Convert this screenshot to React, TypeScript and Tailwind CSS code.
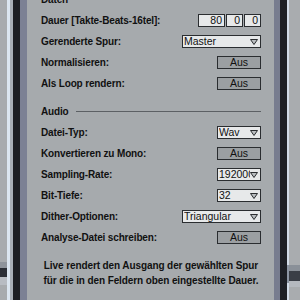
import React from "react";

const font = { fontFamily: '"Liberation Sans", Arial, sans-serif' };

function Arrow() {
  return (
    <svg width="8" height="6" viewBox="0 0 8 6" className="shrink-0">
      <polygon points="0.5,0.5 7.5,0.5 4,5.5" fill="#b9bdc0" stroke="#2a2d30" strokeWidth="1" />
    </svg>
  );
}

function Select({ value, wide }: { value: string; wide?: boolean }) {
  return (
    <div
      className={
        (wide ? "w-[79px]" : "w-[44px]") +
        " h-[13px] flex items-center bg-[#e7e9ea] border border-[#2a2d30] pl-[1px] pr-[2px] overflow-hidden"
      }
    >
      <span className="flex-1 overflow-hidden whitespace-nowrap text-[10.5px] leading-none text-[#111]">{value}</span>
      <Arrow />
    </div>
  );
}

function Toggle({ label }: { label: string }) {
  return (
    <div className="w-[44px] h-[13px] flex items-center justify-center bg-[#9b9fa2] border border-[#2a2d30] text-[10.5px] leading-none text-[#111]">
      {label}
    </div>
  );
}

function NumBox({ value, w }: { value: string; w: string }) {
  return (
    <div className={w + " h-[13px] flex items-center justify-end bg-[#e7e9ea] border border-[#2a2d30] pr-[2px] text-[10.5px] leading-none text-[#111]"}>
      {value}
    </div>
  );
}

function Row({ label, children }: { label: string; children: React.ReactNode }) {
  return (
    <div className="h-[21px] flex items-center justify-between">
      <span className="text-[10px] font-bold tracking-[-0.15px] text-[#111]">{label}</span>
      {children}
    </div>
  );
}

function Header({ label, className }: { label: string; className?: string }) {
  return (
    <div className={"h-[21px] flex items-center " + (className ?? "")}>
      <span className="text-[10px] font-bold tracking-[-0.15px] text-[#111]">{label}</span>
      <div className="flex-1 ml-[7px] h-px bg-[#5c6064]" />
    </div>
  );
}

export default function App() {
  return (
    <div className="w-[300px] h-[300px] flex overflow-hidden bg-[#a6aaad]" style={font}>
      {/* left frame */}
      <div className="w-[7px] flex flex-col bg-[#a8abae]">
        <div className="h-[262px]" />
        <div className="h-[6px] bg-[#8f949b]" />
        <div className="h-[9px] bg-[#2b2e35]" />
        <div className="h-[8px] bg-[#b8bcc2]" />
      </div>
      <div className="w-[3px] bg-[#dce6f0]" />
      <div className="w-[3px] bg-[#a9b0b9]" />
      <div className="w-[7px] bg-[#1d1f25]" />
      <div className="w-[7px] bg-[#7c8194]" />

      {/* panel */}
      <div className="flex-1 flex flex-col pl-[14px] pr-[13px]">
        <Header label="Daten" className="-mt-[11px]" />
        <Row label="Dauer [Takte-Beats-16tel]:">
          <div className="flex gap-[1px]">
            <NumBox value="80" w="w-[27px]" />
            <NumBox value="0" w="w-[17px]" />
            <NumBox value="0" w="w-[17px]" />
          </div>
        </Row>
        <Row label="Gerenderte Spur:">
          <Select value="Master" wide />
        </Row>
        <Row label="Normalisieren:">
          <Toggle label="Aus" />
        </Row>
        <Row label="Als Loop rendern:">
          <Toggle label="Aus" />
        </Row>

        <Header label="Audio" className="mt-[7px]" />
        <Row label="Datei-Typ:">
          <Select value="Wav" />
        </Row>
        <Row label="Konvertieren zu Mono:">
          <Toggle label="Aus" />
        </Row>
        <Row label="Sampling-Rate:">
          <Select value="192000" />
        </Row>
        <Row label="Bit-Tiefe:">
          <Select value="32" />
        </Row>
        <Row label="Dither-Optionen:">
          <Select value="Triangular" wide />
        </Row>
        <Row label="Analyse-Datei schreiben:">
          <Toggle label="Aus" />
        </Row>

        <p className="mt-[10px] text-center text-[10px] font-bold leading-[15px] tracking-[-0.1px] text-[#111]">
          Live rendert den Ausgang der gewählten Spur
          <br />
          für die in den Feldern oben eingestellte Dauer.
        </p>
      </div>

      {/* right frame */}
      <div className="w-[6px] bg-[#787d8f]" />
      <div className="w-[7px] bg-[#1d1f25]" />
      <div className="w-[2px] flex flex-col bg-[#d2dce8]">
        <div className="h-[265px]" />
        <div className="h-[18px] bg-[#8d96a4]" />
      </div>
      <div className="w-[11px] flex flex-col bg-[#a9acaf]">
        <div className="h-[265px]" />
        <div className="h-[6px] bg-[#8a9098]" />
        <div className="h-[10px] bg-[#3a3e46]" />
        <div className="h-[6px] bg-[#b5b9bf]" />
      </div>
    </div>
  );
}
